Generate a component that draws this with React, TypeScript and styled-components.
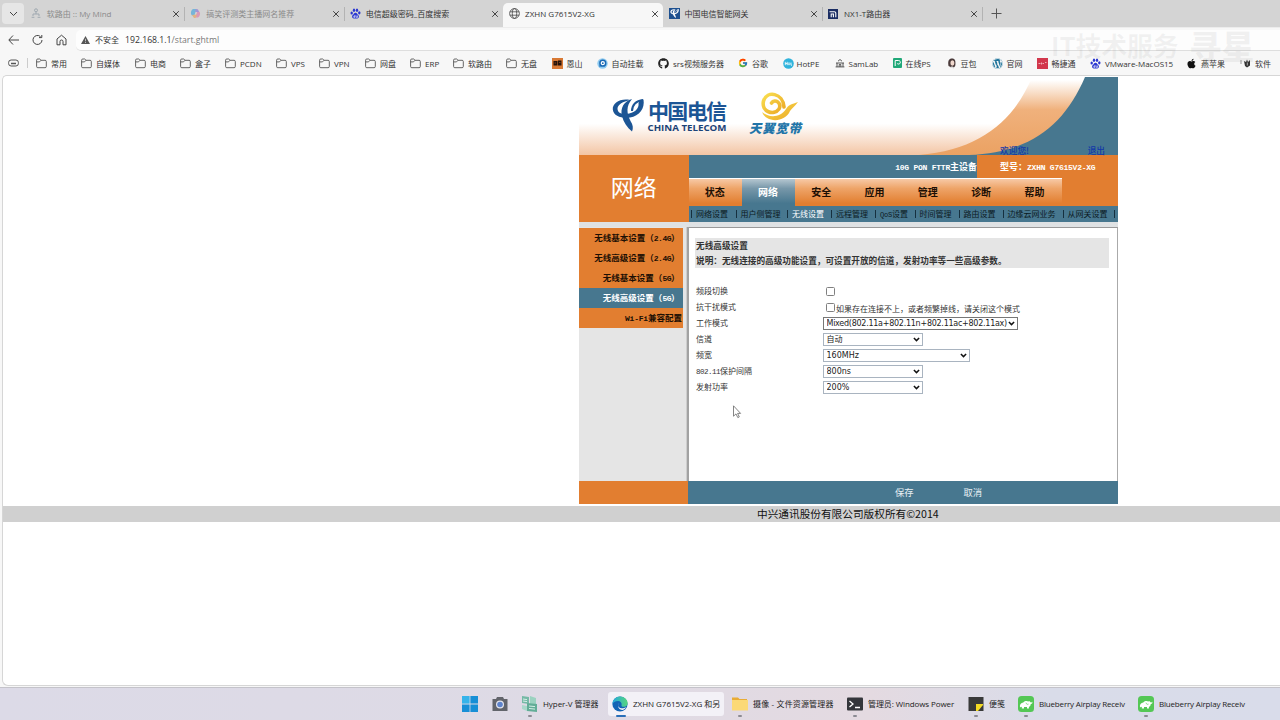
import * as React from 'react';
import styled, { createGlobalStyle } from 'styled-components';
import { FaApple, FaGithub, FaWordpress } from 'react-icons/fa';
import { FcGoogle } from 'react-icons/fc';

const uiFont = `"Open Sans", "Noto Sans CJK SC", sans-serif`;
const songFont = `"Noto Sans CJK SC", sans-serif`;

const GlobalStyle = createGlobalStyle`
  * { box-sizing: border-box; }
  body { margin: 0; overflow: hidden; background: #f7f7f7; }
`;

/* ---------- browser window ---------- */

const Screen = styled.div`
  position: relative;
  width: 1280px;
  height: 720px;
  display: flex;
  flex-direction: column;
  overflow: hidden;
  background: #f7f7f7;
  font-family: ${uiFont};
  font-size: 8px;
  color: #333;
  white-space: nowrap;
`;
const TabStrip = styled.div`
  display: flex;
  height: 27px;
  flex: none;
  padding-left: 2px;
  background: #d4d4d4;
`;
const TabSearch = styled.div`
  width: 22px;
  height: 21px;
  margin: 3px 1px 0 0;
  border-radius: 4px;
  background: #e6e6e6;
  display: flex;
  align-items: center;
  justify-content: center;
`;
const BrowserTab = styled.div<{ $active?: boolean; $dim?: boolean }>`
  display: flex;
  align-items: center;
  width: 159.45px;
  height: ${p => (p.$active ? 24 : 21)}px;
  margin-top: 3px;
  padding: 0 4px 0 6px;
  border-radius: 5px 5px 0 0;
  background: ${p => (p.$active ? '#f7f7f7' : 'transparent')};
  color: ${p => (p.$dim ? '#8b8b8b' : '#333')};
  ${p => p.$active && 'padding-bottom: 3px;'}
`;
const TabIcon = styled.div`
  width: 15.8px;
  height: 12px;
  display: flex;
  align-items: center;
`;
const TabTitle = styled.span`
  flex: 1;
  padding-bottom: 1px;
`;
const TabSep = styled.i`
  width: 1px;
  height: 14px;
  margin: 7px -1px 0 0;
  background: #b3b3b3;
`;
const NewTab = styled.div`
  padding: 8px 0 0 9px;
`;
const AddressRow = styled.div`
  display: flex;
  align-items: center;
  flex: none;
  height: 24px;
  padding: 2px 0 0 8px;
  border-top: 1px solid #ececec;
`;
const ToolIcon = styled.div`
  width: 24px;
  height: 13px;
`;
const AddressBox = styled.div`
  display: flex;
  align-items: center;
  flex: 1;
  height: 21px;
  margin-left: -4px;
  padding-left: 5px;
  border-radius: 5px 0 0 5px;
  border-bottom: 1px solid #dedede;
  background: #fdfdfd;
`;
const Unsafe = styled.span`
  margin: 0 6px 1px 5px;
`;
const Url = styled.span`
  font-size: 8.7px;
  color: #777;
  b { font-weight: 400; color: #333; }
`;
const Bookmarks = styled.div`
  display: flex;
  align-items: center;
  flex: none;
  height: 24px;
  padding-left: 8px;
`;
const BookmarkLead = styled.div`
  width: 21px;
  height: 10px;
  border-right: 1px solid #ccc;
  margin-right: 8px;
`;
const Bookmark = styled.div<{ $w: number; $gap?: number }>`
  display: flex;
  align-items: center;
  flex: none;
  width: ${p => p.$w}px;
  gap: ${p => p.$gap || 3}px;
  svg { flex: none; }
`;
const Watermark = styled.div`
  position: absolute;
  left: 1051px;
  top: 26px;
  display: flex;
  gap: 10px;
  font: 700 26px/38px "Noto Sans CJK SC", sans-serif;
  letter-spacing: -0.2px;
  color: rgba(120, 120, 120, 0.09);
  b { font-size: 33px; font-weight: 900; }
`;
const Doc = styled.div`
  flex: none;
  height: 611px;
  margin-left: 2px;
  border: 1px solid #d6d6d6;
  border-right: 0;
  border-radius: 5px 0 0 6px;
  background: #fff;
`;

/* ---------- gateway page ---------- */

const Portal = styled.div`
  width: 539px;
  margin: 1px 0 0 576px;
  font-family: ${songFont};
  color: #111;
`;
const Banner = styled.div`
  height: 78px;
  svg { display: block; }
`;
const Welcome = styled.div`
  position: relative;
  display: flex;
  justify-content: space-between;
  height: 12px;
  margin-top: -12px;
  padding: 2px 13px 0 421px;
  line-height: 12px;
  font-size: 8.7px;
  font-weight: 500;
  color: #1238a8;
`;
const NavBlock = styled.div`
  display: grid;
  grid-template-columns: 109.5px 429.5px;
  height: 67px;
`;
const SectionTitle = styled.div`
  display: flex;
  align-items: center;
  justify-content: center;
  padding-bottom: 5px;
  background: #e27e30;
  color: #fff;
  font-size: 23px;
`;
const NavRight = styled.div`
  display: flex;
  flex-direction: column;
  background: #47778f;
`;
const DeviceBar = styled.div`
  display: flex;
  height: 23px;
  line-height: 23px;
  font-size: 9px;
  font-weight: 700;
  color: #fff;
`;
const DeviceKind = styled.div`
  width: 288.5px;
  text-align: right;
`;
const DeviceModel = styled.div`
  width: 141px;
  padding-left: 23px;
  background: #e27e30;
`;
const Mono = styled.span<{ $size?: number; $ls?: number }>`
  font-family: "Liberation Mono", monospace;
  font-size: ${p => p.$size || 8}px;
  letter-spacing: ${p => p.$ls ?? -0.24}px;
`;
const MainTabs = styled.div`
  display: flex;
  height: 28px;
  background: #e27e30;
`;
const MainTab = styled.div<{ $on?: boolean }>`
  width: 53.3px;
  padding-top: 1px;
  border-top: 1px solid #fff;
  background: ${p =>
    p.$on
      ? 'linear-gradient(#b4c6d0 0, #7797a9 35%, #47778f 90%)'
      : 'linear-gradient(#f7c9a6 0, #eea468 35%, #e27e30 90%)'};
  color: ${p => (p.$on ? '#fff' : '#1c0f04')};
  font-size: 10px;
  font-weight: 700;
  line-height: 24px;
  text-align: center;
  text-indent: -1px;
`;
const SubNav = styled.div`
  display: flex;
  align-items: center;
  height: 16px;
  padding: 0 0 1px 2.5px;
`;
const SubItem = styled.div<{ $w: number; $on?: boolean }>`
  flex: none;
  width: ${p => p.$w}px;
  height: 8px;
  padding-left: 4px;
  border-left: 1px solid #16303f;
  line-height: 8px;
  color: ${p => (p.$on ? '#fff' : '#0c1a22')};
`;
const Body = styled.div`
  display: grid;
  grid-template-columns: 110px 429px;
  height: 259px;
  padding-top: 5px;
  background: #dfe2e4;
`;
const Sidebar = styled.div`
  padding-top: 1px;
  background: #e5e5e5;
  border-right: 2px solid #a2a2a2;
  box-shadow: inset -1px 0 #cdcdcd;
`;
const SideItem = styled.div<{ $on?: boolean; $flush?: boolean }>`
  width: 104px;
  height: 20px;
  padding-right: ${p => (p.$flush ? 1 : 3.5)}px;
  background: ${p => (p.$on ? '#47778f' : '#e27e30')};
  color: ${p => (p.$on ? '#fff' : '#1c0f04')};
  font-size: 8.5px;
  font-weight: 700;
  line-height: 19px;
  text-align: right;
`;
const Content = styled.div`
  padding: 10px 8px 0 6px;
  border-top: 1px solid #999;
  border-right: 1px solid #aaa;
  background: #fff;
`;
const Notice = styled.div`
  height: 30px;
  padding-left: 1px;
  background: #e5e5e5;
  font-size: 8.65px;
  font-weight: 700;
  line-height: 14.5px;
  color: #333;
`;
const Form = styled.div`
  padding: 15px 0 0 1px;
`;
const Field = styled.div`
  display: grid;
  grid-template-columns: 127px auto;
  align-items: center;
  justify-content: start;
  height: 16px;
  color: #333;
`;
const FieldLabel = styled.span`
  padding-bottom: 1px;
`;
const CheckLine = styled.label`
  display: flex;
  align-items: center;
  gap: 1px;
  padding-left: 3px;
`;
const Check = styled.input`
  appearance: none;
  width: 9px;
  height: 9px;
  margin: 0;
  border: 1px solid #808080;
  border-radius: 1.5px;
  background: #fff;
`;
const CheckHint = styled.span`
  padding-top: 2px;
`;
const SelectBox = styled.div<{ $w: number; $dark?: boolean }>`
  display: flex;
  align-items: center;
  width: ${p => p.$w}px;
  height: 13px;
  padding: 0 2px 0 2.5px;
  border: 1px solid ${p => (p.$dark ? '#777' : '#a9b4c0')};
  background: #fff;
`;
const Select = styled.select<{ $ls?: number }>`
  appearance: none;
  flex: 1;
  min-width: 0;
  padding: 0;
  border: 0;
  background: none;
  font: 8px/11px "DejaVu Sans", "Noto Sans CJK SC", sans-serif;
  letter-spacing: ${p => p.$ls || 0}px;
  color: #222;
`;
const Actions = styled.div`
  display: grid;
  grid-template-columns: 109px 207px 68.5px auto;
  height: 23px;
  background: linear-gradient(90deg, #e27e30 109.5px, #47778f 109.5px);
  color: #e8f0f4;
  font-size: 9.3px;
  line-height: 22px;
`;
const Copyright = styled.div`
  width: 1278px;
  height: 16px;
  margin-top: 2px;
  padding-left: 754px;
  background: #d0d0d0;
  color: #111;
  font-family: ${songFont};
  font-size: 10.67px;
  line-height: 16px;
`;
const Pointer = styled.svg`
  position: absolute;
  left: 732px;
  top: 405px;
`;

/* ---------- taskbar ---------- */

const Taskbar = styled.div`
  display: flex;
  flex: none;
  height: 33px;
  margin-top: 1px;
  padding: 4px 0 0 454px;
  border-top: 1px solid #c4c3ca;
  background: linear-gradient(90deg, #dcdae7 0, #dedae5 45%, #e4dae1 68%, #d9dce9 82%, #d9dcea 100%);
`;
const TaskItem = styled.div<{ $w: number; $active?: boolean }>`
  display: flex;
  align-items: center;
  flex: none;
  gap: 5px;
  width: ${p => p.$w}px;
  height: 24px;
  padding-left: ${p => (p.$active ? 4 : 8)}px;
  border-radius: 3px;
  background: ${p => (p.$active ? '#f3f1f7' : 'none')};
  svg { flex: none; }
`;
const TaskCell = styled.div<{ $ml?: number }>`
  position: relative;
  margin-left: ${p => p.$ml || 0}px;
`;
const Running = styled.i<{ $active?: boolean }>`
  position: absolute;
  bottom: 3px;
  left: ${p => (p.$active ? 8 : 14)}px;
  width: ${p => (p.$active ? 10 : 4)}px;
  height: 2px;
  border-radius: 1px;
  background: ${p => (p.$active ? '#2a6fb8' : '#8c8b93')};
`;
const TaskText = styled.span<{ $ls?: number }>`
  padding-bottom: 1px;
  letter-spacing: ${p => p.$ls || 0}px;
  color: #222;
`;

/* ---------- icons ---------- */

const Close = () => (
  <svg width="8" height="8" viewBox="0 0 8 8" stroke="#333" strokeWidth="0.9">
    <path d="M1.2 1.2L6.8 6.8M6.8 1.2L1.2 6.8" />
  </svg>
);
const Folder = () => (
  <svg width="11" height="11" viewBox="0 0 11 11" fill="none" stroke="#555" strokeWidth="0.9">
    <path d="M.6 2.2a1.2 1.2 0 0 1 1.2-1.2h1.9l1.3 1.3h4.1a1.2 1.2 0 0 1 1.2 1.2v5a1.2 1.2 0 0 1-1.2 1.2H1.8A1.2 1.2 0 0 1 .6 8.5z" />
    <path d="M.6 3.9h2.9L5 2.3" />
  </svg>
);
const Globe = () => (
  <svg width="11" height="11" viewBox="0 0 11 11" fill="none" stroke="#444" strokeWidth="0.8">
    <circle cx="5.5" cy="5.5" r="4.9" />
    <ellipse cx="5.5" cy="5.5" rx="2.2" ry="4.9" />
    <path d="M1 3.8h9M1 7.2h9" />
  </svg>
);
const MindMap = () => (
  <svg width="10" height="11" viewBox="0 0 10 11" fill="none" stroke="#9fa8b0" strokeWidth="1">
    <circle cx="5" cy="2.3" r="1.5" />
    <path d="M5 4v2M2 8V6h6v2M.6 9.3h2.8M6.6 9.3h2.8" />
  </svg>
);
const Copilot = () => (
  <svg width="11" height="11" viewBox="0 0 11 11" opacity="0.65">
    <path d="M3 1h3.5L4.5 7 2 7.5C0 6 1 2 3 1z" fill="#45a5dc" />
    <path d="M6 1c2 0 2 2 3 2.500 2 1 1 5-1 6H5l2-5z" fill="#e07aa8" />
    <path d="M2 7l5-.5L5.500 10H4z" fill="#e8a25a" />
    <path d="M6 1l2 .5 1 2.500H5z" fill="#8575d8" />
  </svg>
);
const BaiduPaw = () => (
  <svg width="11" height="11" viewBox="0 0 11 11" fill="#2b37d0">
    <ellipse cx="1.7" cy="5" rx="1.2" ry="1.6" />
    <ellipse cx="4" cy="2.2" rx="1.2" ry="1.7" />
    <ellipse cx="7" cy="2.2" rx="1.2" ry="1.7" />
    <ellipse cx="9.3" cy="4.8" rx="1.2" ry="1.6" />
    <path d="M5.5 4.7c1.3 0 1.800 1.500 2.800 2.400 1.200 1.200.6 3.500-1 3.500H3.700c-1.600 0-2.200-2.300-1-3.500 1-.9 1.500-2.400 2.800-2.400z" />
    <path d="M4.9 7v2.400H3.800V8.200h1M6.200 7.500v1.900h1.300V7.500" fill="none" stroke="#fff" strokeWidth=".6" />
  </svg>
);
const TelecomMark = ({ color }: { color: string }) => (
  <g fill={color}>
    <path d="M18 3C8 1 .3 6.5 .8 12.5C1.5 19.5 10 21.500 18 20.5C27.5 19 33 11.5 31.5 2.500C28.5 2.500 27 4 26.5 6C27.5 11.500 22 16.500 14.5 17C9 17.300 5.500 15.500 5.500 11.500C5.800 7.500 11 4.500 18 3z" />
    <path d="M20 2C12 4 8 11 10 19C11.500 25 15 30.500 20 34.500C21.500 31 21 28 18.500 24C14.500 16 14 9 20 2z" />
    <path d="M20 14C20 8 24 3.500 31 3" fill="none" stroke={color} strokeWidth="2" />
  </g>
);
const TelecomTile = () => (
  <svg width="11" height="11" viewBox="-4 -2 40 40">
    <rect x="-4" y="-2" width="40" height="40" fill="#1d5090" />
    <TelecomMark color="#fff" />
  </svg>
);
const NxTile = () => (
  <svg width="10" height="10" viewBox="0 0 10 10">
    <rect width="10" height="10" fill="#1b2d63" />
    <path d="M1.500 2.700h4.800a1.500 1.500 0 0 1 1.500 1.500V8.200M3.200 8.200V5h2.200v3.200" fill="none" stroke="#fff" strokeWidth="1.1" />
  </svg>
);
const EnshanTile = () => (
  <svg width="11" height="11" viewBox="0 0 11 11">
    <rect width="11" height="11" fill="#d87934" />
    <path d="M1.500 3h4v4.500h-4zM6 2.500h3.500v5H6z" fill="#25130a" />
    <path d="M2.500 5h1.500M7 4.500h1.500" stroke="#a95522" strokeWidth=".7" />
  </svg>
);
const MountIcon = () => (
  <svg width="11" height="11" viewBox="0 0 11 11">
    <circle cx="5.5" cy="5.5" r="5.2" fill="#8fcbf0" />
    <circle cx="5.8" cy="5.2" r="2.9" fill="#fff" stroke="#1969b5" strokeWidth="1.5" />
    <circle cx="5.8" cy="5.2" r=".9" fill="#1969b5" />
    <path d="M2.500 8.500l1.700-1.700" stroke="#1969b5" strokeWidth="1.3" />
  </svg>
);
const HotPe = () => (
  <svg width="11" height="11" viewBox="0 0 11 11">
    <circle cx="5.5" cy="5.5" r="5.3" fill="#2fb3dc" />
    <path d="M2.300 3.800v3.400M2.300 5.500h1.900M4.200 3.800v3.400M8 4.500v2.700h1" stroke="#fff" strokeWidth=".8" fill="none" />
    <circle cx="6" cy="5.8" r="1" fill="none" stroke="#fff" strokeWidth=".7" />
  </svg>
);
const SamLab = () => (
  <svg width="10" height="10" viewBox="0 0 10 10" fill="none" stroke="#444" strokeWidth="0.9">
    <path d="M3 3.200L5 1.500l2 1.700M1 5h8M2 5v3.800M8 5v3.800M4.200 8.800V6.500h1.600v2.300M.6 8.900h8.800" />
  </svg>
);
const OnlinePs = () => (
  <svg width="9" height="10" viewBox="0 0 9 10">
    <rect width="9" height="10" rx="1" fill="#20a878" />
    <path d="M2.200 8V2.500h3.300a1.800 1.800 0 1 1-1.300 3" fill="none" stroke="#fff" strokeWidth="1" />
  </svg>
);
const Doubao = () => (
  <svg width="10" height="11" viewBox="0 0 10 11">
    <path d="M1.500 8C.5 3 2 .6 5 .6S9 3 8.200 8l-2 2.300z" fill="#4a3a3a" />
    <ellipse cx="5.4" cy="5" rx="2" ry="2.7" fill="#f0d8cd" />
    <path d="M3 10c0-2 4-2 4 0z" fill="#ddd" />
  </svg>
);
const RedTile = () => (
  <svg width="11" height="11" viewBox="0 0 11 11">
    <rect width="11" height="11" fill="#d2374c" />
    <path d="M1.500 5.500h2M4.500 4.500v2M5.500 5.500h1.500M8 4.500h1.500" stroke="#f5cdd2" strokeWidth=".8" />
  </svg>
);
const HandIcon = () => (
  <svg width="11" height="10" viewBox="0 0 11 10">
    <path d="M4 3l1 5 2 1.500 3-2V2L8 4 7 1.500 6 4z" fill="#333" />
    <path d="M1 2v4" stroke="#999" />
    <path d="M7.300 4.500v3" stroke="#fff" strokeWidth=".6" />
  </svg>
);
const EdgeLogo = () => (
  <svg width="16" height="16" viewBox="0 0 16 16">
    <defs>
      <linearGradient id="edgeTop" x1="0" x2="1">
        <stop offset="0" stopColor="#25a9dd" />
        <stop offset="1" stopColor="#55d67c" />
      </linearGradient>
    </defs>
    <circle cx="8" cy="8" r="7.6" fill="#1264b5" />
    <path d="M.4 8C.5 3.500 4 .4 8 .4c4.300 0 7.600 3 7.600 6.500 0 2.500-2 3.900-4 3.900-1.700 0-2.600-.8-2-1.600C10 7 8.500 5 6 5 3.200 5 .8 6.500.4 8z" fill="url(#edgeTop)" />
    <path d="M7.300 7.200C5.500 8.500 6 12 9.500 12.300c1.700.1 3.500-.5 4.700-1.400-.8 1.500-2 2.500-3.500 3C6.500 14 4.900 9.800 7.300 7.200z" fill="#f3f1f7" />
  </svg>
);
const Elephant = () => (
  <svg width="16" height="16" viewBox="0 0 16 16">
    <rect width="16" height="16" rx="3.5" fill="#54c755" />
    <path d="M2 11.500c-.6-3 1-4.700 3.300-5 1.500-1.700 3.700-1.900 5-1 .9-.6 2-.2 2 .8 1 .3 1.700 0 1.700-.9.900.9.300 2.600-1.300 2.700-.1 1.800-.9 2.600-1.800 3v1.300H9v-1.300H6v1.500H3.800v-1.700L3 10.800z" fill="#fff" />
    <path d="M8 6.700c.3 1.500 1.400 2 2.500 1.400" stroke="#54c755" fill="none" strokeWidth=".7" />
  </svg>
);
const Chevron = () => (
  <svg width="7" height="5" viewBox="0 0 7 5" fill="none" stroke="#111" strokeWidth="1.5">
    <path d="M.9 1l2.600 2.600L6.100 1" />
  </svg>
);

/* ---------- data ---------- */

const tabs = [
  { title: '软路由 :: My Mind', icon: <MindMap />, dim: true, sep: true },
  { title: '搞笑评测类主播网名推荐', icon: <Copilot />, dim: true, sep: true },
  { title: '电信超级密码_百度搜索', icon: <BaiduPaw /> },
  { title: 'ZXHN G7615V2-XG', icon: <Globe />, active: true },
  { title: '中国电信智能网关', icon: <TelecomTile />, sep: true },
  { title: 'NX1-T路由器', icon: <NxTile />, sep: true },
];

const folder = <Folder />;
const bookmarks: [string, number, React.ReactNode, number?][] = [
  ['常用', 45, folder, 4],
  ['自媒体', 54, folder, 4],
  ['电商', 45, folder, 4],
  ['盒子', 45, folder, 4],
  ['PCDN', 51, folder, 4],
  ['VPS', 43, folder, 4],
  ['VPN', 46, folder, 4],
  ['网盘', 45, folder, 4],
  ['ERP', 43, folder, 4],
  ['软路由', 53, folder, 4],
  ['无盘', 45.5, folder, 4],
  ['恩山', 45, <EnshanTile />, 4],
  ['自动挂载', 61.5, <MountIcon />, 4],
  ['srs视频服务器', 80, <FaGithub size={11} color="#222" />, 4],
  ['谷歌', 44.5, <FcGoogle size={10} />, 4],
  ['HotPE', 52, <HotPe />],
  ['SamLab', 58, <SamLab />, 4],
  ['在线PS', 54, <OnlinePs />, 4],
  ['豆包', 45, <Doubao />, 4],
  ['官网', 45, <FaWordpress size={11} color="#21759b" />, 4],
  ['畅捷通', 53.5, <RedTile />, 4],
  ['VMware-MacOS15', 96, <BaiduPaw />, 4],
  ['燕苹果', 54, <FaApple size={11} color="#111" />, 4],
  ['软件', 40, <HandIcon />, 4],
];

const mainTabs = ['状态', '网络', '安全', '应用', '管理', '诊断', '帮助'];

const subItems: [React.ReactNode, number][] = [
  ['网络设置', 44.5],
  ['用户侧管理', 51.5],
  ['无线设置', 44],
  ['远程管理', 44],
  [<><Mono $size={7} $ls={-0.2}>QoS</Mono>设置</>, 39.5],
  ['时间管理', 44],
  ['路由设置', 44],
  ['边缘云网业务', 60],
  ['从网关设置', 51.5],
  ['', 1],
];

const fields: { label: React.ReactNode; value: string; width: number; ls?: number }[] = [
  { label: '工作模式', value: 'Mixed(802.11a+802.11n+802.11ac+802.11ax)', width: 195, ls: -0.26 },
  { label: '信道', value: '自动', width: 100 },
  { label: '频宽', value: '160MHz', width: 147 },
  { label: <><Mono $size={7.5} $ls={-0.5}>802.11</Mono>保护间隔</>, value: '800ns', width: 100 },
  { label: '发射功率', value: '200%', width: 100 },
];

/* ---------- parts ---------- */

const BannerArt = () => (
  <svg width="539" height="78" viewBox="0 0 539 78">
    <defs>
      <linearGradient id="peach" x1="0" y1="0" x2="0" y2="1">
        <stop offset="0.6" stopColor="#fff" />
        <stop offset="1" stopColor="#f3c5a4" />
      </linearGradient>
      <linearGradient id="band" x1="0" y1="0" x2="0" y2="1">
        <stop offset="0.04" stopColor="#fff" />
        <stop offset="0.42" stopColor="#f0b17c" />
        <stop offset="1" stopColor="#eba263" />
      </linearGradient>
      <linearGradient id="gold" x1="0" y1="0" x2="1" y2="1">
        <stop offset="0" stopColor="#f9df50" />
        <stop offset="1" stopColor="#eba724" />
      </linearGradient>
    </defs>
    <rect width="539" height="78" fill="url(#peach)" />
    <path d="M453 0C436 42 402 73 340 78H539V0z" fill="url(#band)" />
    <path d="M506 0C486 47 452 76 390 78H539V0z" fill="#47778f" />
    <g transform="translate(33 20)">
      <TelecomMark color="#1c5595" />
      <text x="36" y="21.5" textLength="79" fontFamily="Noto Sans CJK SC" fontSize="21" fontWeight="700" fill="#1c5595">中国电信</text>
      <text x="35.5" y="34" textLength="79" lengthAdjust="spacingAndGlyphs" fontFamily="Open Sans" fontSize="9.5" fontWeight="700" fill="#1b4377">CHINA TELECOM</text>
    </g>
    <path d="M205 30C204 16 188 13 184.500 24C182 35 195 39 200 32C203 26 196 21 192.500 26" fill="none" stroke="url(#gold)" strokeWidth="3.6" strokeLinecap="round" />
    <path d="M183 35C187 46 206 46 211 34C213 31 216 29 219 25C213 27 209 28 207 32C201 41 190 41 183 35z" fill="url(#gold)" />
    <text x="170" y="56" textLength="52" fontFamily="Noto Sans CJK SC" fontSize="12.5" fontStyle="italic" fontWeight="900" fill="#2174a8">天翼宽带</text>
  </svg>
);

class BrowserChrome extends React.Component<{}, {}> {
  render() {
    return (
      <>
        <TabStrip>
          <TabSearch>
            <svg width="9" height="6" viewBox="0 0 9 6" fill="none" stroke="#444"><path d="M1 1l3.500 3.500L8 1" /></svg>
          </TabSearch>
          {tabs.map(t => (
            <React.Fragment key={t.title}>
              <BrowserTab $active={t.active} $dim={t.dim}>
                <TabIcon>{t.icon}</TabIcon>
                <TabTitle>{t.title}</TabTitle>
                <Close />
              </BrowserTab>
              {t.sep && <TabSep />}
            </React.Fragment>
          ))}
          <NewTab>
            <svg width="11" height="11" viewBox="0 0 11 11" stroke="#555"><path d="M5.500 .5v10M.5 5.500h10" /></svg>
          </NewTab>
        </TabStrip>
        <AddressRow>
          <ToolIcon>
            <svg width="11" height="12" viewBox="0 0 11 12" fill="none" stroke="#444"><path d="M11 6H1M5 1.500L.8 6 5 10.500" /></svg>
          </ToolIcon>
          <ToolIcon>
            <svg width="11" height="12" viewBox="0 0 11 12" fill="none" stroke="#444"><path d="M8.500 2.600A4.500 4.500 0 1 0 10 6M9.800 1v2.600H7" /></svg>
          </ToolIcon>
          <ToolIcon>
            <svg width="11" height="12" viewBox="0 0 11 12" fill="none" stroke="#444"><path d="M1 5l4.500-3.800L10 5v5.800H7V7.500a1.500 1.500 0 0 0-3 0v3.300H1z" /></svg>
          </ToolIcon>
          <AddressBox>
            <svg width="9" height="8" viewBox="0 0 9 8"><path d="M4.500 0L9 8H0z" fill="#555" /><path d="M4.500 2.800v2.500M4.500 6v1" stroke="#fff" strokeWidth=".6" /></svg>
            <Unsafe>不安全</Unsafe>
            <Url><b>192.168.1.1</b>/start.ghtml</Url>
          </AddressBox>
        </AddressRow>
        <Bookmarks>
          <BookmarkLead>
            <svg width="11" height="10" viewBox="0 0 11 10" fill="none" stroke="#555"><rect x=".6" y="2" width="9.8" height="6" rx="2.5" /><path d="M3 5.500h5" strokeWidth="1.5" /></svg>
          </BookmarkLead>
          {bookmarks.map(([name, w, icon, gap]) => (
            <Bookmark key={name} $w={w} $gap={gap}>{icon}{name}</Bookmark>
          ))}
        </Bookmarks>
      </>
    );
  }
}

class Gateway extends React.Component<{}, {}> {
  render() {
    return (
      <Portal>
        <Banner><BannerArt /><Welcome><span>欢迎您!</span><span>退出</span></Welcome></Banner>
        <NavBlock>
          <SectionTitle>网络</SectionTitle>
          <NavRight>
            <DeviceBar>
              <DeviceKind><Mono>10G PON FTTR</Mono>主设备</DeviceKind>
              <DeviceModel>型号：<Mono>ZXHN G7615V2-XG</Mono></DeviceModel>
            </DeviceBar>
            <MainTabs>
              {mainTabs.map(t => <MainTab key={t} $on={t === '网络'}>{t}</MainTab>)}
            </MainTabs>
            <SubNav>
              {subItems.map(([t, w], i) => <SubItem key={i} $w={w} $on={t === '无线设置'}>{t}</SubItem>)}
            </SubNav>
          </NavRight>
        </NavBlock>
        <Body>
          <Sidebar>
            <SideItem>无线基本设置（<Mono $ls={-0.5}>2.4G</Mono>）</SideItem>
            <SideItem>无线高级设置（<Mono $ls={-0.5}>2.4G</Mono>）</SideItem>
            <SideItem>无线基本设置（<Mono $ls={-0.5}>5G</Mono>）</SideItem>
            <SideItem $on>无线高级设置（<Mono $ls={-0.5}>5G</Mono>）</SideItem>
            <SideItem $flush><Mono $ls={-0.2}>Wi-Fi</Mono>兼容配置</SideItem>
          </Sidebar>
          <Content>
            <Notice>
              <div>无线高级设置</div>
              <div>说明：无线连接的高级功能设置，可设置开放的信道，发射功率等一些高级参数。</div>
            </Notice>
            <Form>
              <Field>
                <FieldLabel>频段切换</FieldLabel>
                <CheckLine><Check type="checkbox" /></CheckLine>
              </Field>
              <Field>
                <FieldLabel>抗干扰模式</FieldLabel>
                <CheckLine>
                  <Check type="checkbox" />
                  <CheckHint>如果存在连接不上，或者频繁掉线，请关闭这个模式</CheckHint>
                </CheckLine>
              </Field>
              {fields.map((f, i) => (
                <Field key={f.value}>
                  <FieldLabel>{f.label}</FieldLabel>
                  <SelectBox $w={f.width} $dark={i === 0}>
                    <Select $ls={f.ls}><option>{f.value}</option></Select>
                    <Chevron />
                  </SelectBox>
                </Field>
              ))}
            </Form>
          </Content>
        </Body>
        <Actions><i /><i /><span>保存</span><span>取消</span></Actions>
      </Portal>
    );
  }
}

const Tasks = () => (
  <Taskbar>
    <TaskItem $w={30}>
      <svg width="16" height="16" viewBox="0 0 16 16" fill="#178fd6"><path d="M0 0h7.600v7.600H0z" fill="#35b3ea" /><path d="M8.400 0H16v7.600H8.400zM0 8.400h7.600V16H0zM8.400 8.400H16V16H8.400z" /></svg>
    </TaskItem>
    <TaskItem $w={30}>
      <svg width="16" height="14" viewBox="0 0 16 14"><path d="M5 0h6l1 2h3.500v12H.5V2H4z" fill="#62646b" /><circle cx="8" cy="7.5" r="4" fill="#e4e5ee" /><circle cx="8" cy="7.5" r="2.8" fill="#5d83cc" /></svg>
    </TaskItem>
    <TaskCell>
      <TaskItem $w={90}>
        <svg width="16" height="16" viewBox="0 0 16 16"><path d="M0 0l7 1v7l-7-1z" fill="#75b9a6" /><path d="M8 0l6 2v7L8 8z" fill="#9bd2c0" /><path d="M5 7l10 1v8L5 15z" fill="#62ad97" /><path d="M0 9l5 1v5l-5-2z" fill="#a9d8ca" /><path d="M1 3l4 .6M1 5l4 .6M7 10l6 .6M7 12.500l6 .6" stroke="#d6efe7" /></svg>
        <TaskText $ls={-0.05}>Hyper-V 管理器</TaskText>
      </TaskItem>
      <Running />
    </TaskCell>
    <TaskCell $ml={4}>
      <TaskItem $w={116} $active><EdgeLogo /><TaskText $ls={-0.03}>ZXHN G7615V2-XG 和另</TaskText></TaskItem>
      <Running $active />
    </TaskCell>
    <TaskCell>
      <TaskItem $w={115}>
        <svg width="16" height="16" viewBox="0 0 16 16"><path d="M0 1.500h6L7.500 3H15v11H0z" fill="#e9ac35" /><path d="M0 4h16v10.500H0z" fill="#fbd976" /></svg>
        <TaskText $ls={0.15}>摄像 - 文件资源管理器</TaskText>
      </TaskItem>
      <Running />
    </TaskCell>
    <TaskCell>
      <TaskItem $w={121}>
        <svg width="16" height="14" viewBox="0 0 16 14"><rect width="16" height="13" y=".5" rx="1" fill="#34363b" /><path d="M2.500 4l3.500 3-3.500 3M8 10.500h5" fill="none" stroke="#fff" strokeWidth="1.3" /></svg>
        <TaskText $ls={-0.1}>管理员: Windows Power</TaskText>
      </TaskItem>
      <Running />
    </TaskCell>
    <TaskCell>
      <TaskItem $w={50}>
        <svg width="16" height="16" viewBox="0 0 16 16"><path d="M.5 1h15v14H.5z" fill="#393939" /><path d="M8 8h7v1l-5 6H8z" fill="#f4da24" /></svg>
        <TaskText>便笺</TaskText>
      </TaskItem>
      <Running />
    </TaskCell>
    <TaskCell>
      <TaskItem $w={115}><Elephant /><TaskText $ls={-0.18}>Blueberry Airplay Receiv</TaskText></TaskItem>
      <Running />
    </TaskCell>
    <TaskCell $ml={5}>
      <TaskItem $w={115}><Elephant /><TaskText $ls={-0.18}>Blueberry Airplay Receiv</TaskText></TaskItem>
      <Running />
    </TaskCell>
  </Taskbar>
);

export default class App extends React.Component<{}, {}> {
  render() {
    return (
      <Screen>
        <GlobalStyle />
        <BrowserChrome />
        <Doc>
          <Gateway />
          <Copyright>中兴通讯股份有限公司版权所有©2014</Copyright>
        </Doc>
        <Tasks />
        <Watermark>IT技术服务<b>寻星</b></Watermark>
        <Pointer width="10" height="14" viewBox="0 0 10 14" fill="#fff" stroke="#666" strokeWidth="0.8">
          <path d="M1.500 .8v10.400l2.500-2.300 1.800 3.700 1.500-.7-1.700-3.500h3z" />
        </Pointer>
      </Screen>
    );
  }
}
